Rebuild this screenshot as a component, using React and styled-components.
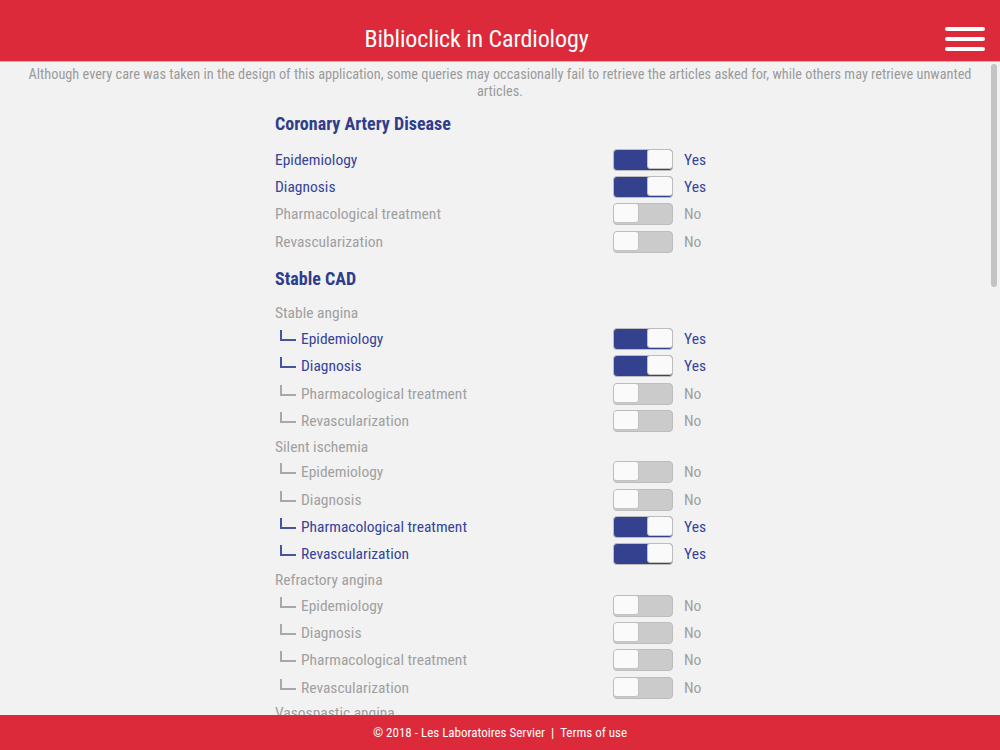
import React from 'react';
import styled, { createGlobalStyle } from 'styled-components';

const GlobalStyle = createGlobalStyle`
  html, body {
    margin: 0;
    padding: 0;
    height: 100%;
    background: #f2f2f2;
    font-family: "Roboto Condensed", "Liberation Sans Narrow", "DejaVu Sans Condensed", Roboto, sans-serif;
  }
  #root {
    height: 100%;
  }
`;

const Page = styled.div`
  height: 100vh;
  display: flex;
  flex-direction: column;
  background: #f2f2f2;
`;

const Header = styled.header`
  flex: 0 0 61px;
  box-sizing: border-box;
  display: flex;
  align-items: center;
  background: #dc2a3a;
  padding: 17px 15px 0 0;
  box-shadow: 0 1px 0 #e9a6ad;
  position: relative;
  z-index: 1;
`;

const Title = styled.h1`
  flex: 1;
  margin: 0;
  padding-left: 8px;
  text-align: center;
  color: #fff;
  font-size: 24px;
  font-weight: 400;
  letter-spacing: -0.1px;
`;

const MenuButton = styled.button`
  width: 40px;
  height: 24px;
  padding: 0;
  border: 0;
  background: none;
  display: flex;
  flex-direction: column;
  justify-content: space-between;
  cursor: pointer;
`;

const MenuLine = styled.span`
  display: block;
  height: 4px;
  border-radius: 2px;
  background: #fff;
`;

const Body = styled.div`
  flex: 1;
  min-height: 0;
  position: relative;
  display: flex;
`;

const Main = styled.main`
  flex: 1;
  overflow-y: auto;
  padding-top: 5px;
`;

const ScrollThumb = styled.div`
  position: absolute;
  top: 3px;
  right: 3px;
  width: 6px;
  height: 223px;
  border-radius: 3px;
  background: #c4c4c4;
  pointer-events: none;
`;

const Disclaimer = styled.p`
  margin: 0;
  padding: 0 18px;
  text-align: center;
  color: #9b9b9b;
  font-size: 14.3px;
  line-height: 17px;
`;

const Column = styled.div`
  width: 450px;
  margin: 0 auto;
  padding-bottom: 20px;
`;

const SectionTitle = styled.h2`
  margin: 0;
  height: 46px;
  display: flex;
  align-items: center;
  color: #2f3d8e;
  font-size: 18px;
  font-weight: 700;
`;

const Group = styled.div`
  height: 24px;
  display: flex;
  align-items: center;
  color: #a0a0a0;
  font-size: 15.5px;
`;

const Row = styled.div`
  height: 27.33px;
  display: flex;
  align-items: center;
  font-size: 15.5px;
  color: ${(p) => (p.on ? '#35439a' : '#a0a0a0')};
`;

const Label = styled.div`
  flex: 1;
  display: flex;
  align-items: center;
  padding-left: ${(p) => (p.sub ? '5px' : '0')};
`;

const Branch = styled.span`
  width: 14px;
  height: 9px;
  margin: -7px 5px 0 0;
  border-left: 2px solid currentColor;
  border-bottom: 2px solid currentColor;
  opacity: 0.9;
`;

const Switch = styled.div`
  width: 60px;
  height: 22px;
  box-sizing: border-box;
  border-radius: 4px;
  border: 1px solid #bdbdbd;
  background: ${(p) => (p.on ? '#33418f' : '#cbcbcb')};
  display: flex;
  justify-content: ${(p) => (p.on ? 'flex-end' : 'flex-start')};
  overflow: hidden;
`;

const Knob = styled.span`
  width: 26px;
  height: 100%;
  box-sizing: border-box;
  background: #fafafa;
  border-radius: 3px;
  border: 1px solid #c2c2c2;
  margin: -1px;
`;

const Status = styled.span`
  width: 41px;
  margin-left: 11px;
  font-size: 15.5px;
`;

const Footer = styled.footer`
  flex: 0 0 35px;
  display: flex;
  align-items: center;
  justify-content: center;
  background: #dc2a3a;
  color: #fff;
  font-size: 13px;
`;

const FooterLink = styled.a`
  color: #fff;
  text-decoration: none;
`;

const Sep = styled.span`
  margin: 0 6px;
`;

const topics = ['Epidemiology', 'Diagnosis', 'Pharmacological treatment', 'Revascularization'];

const sections = [
  {
    title: 'Coronary Artery Disease',
    items: [{ values: [true, true, false, false] }],
  },
  {
    title: 'Stable CAD',
    items: [
      { group: 'Stable angina', values: [true, true, false, false] },
      { group: 'Silent ischemia', values: [false, false, true, true] },
      { group: 'Refractory angina', values: [false, false, false, false] },
      { group: 'Vasospastic angina', values: [false, false, false, false] },
      { group: 'Microvascular angina', values: [false, false, false, false] },
    ],
  },
  {
    title: 'Acute Coronary Syndromes',
    items: [
      { group: 'Unstable angina', values: [false, false, false, false] },
      { group: 'NSTEMI', values: [false, false, false, false] },
      { group: 'STEMI', values: [false, false, false, false] },
    ],
  },
  {
    title: 'Heart Failure',
    items: [
      { group: 'Chronic heart failure', values: [false, false, false, false] },
      { group: 'Acute heart failure', values: [false, false, false, false] },
    ],
  },
];

function ToggleRow({ name, on, sub }) {
  return (
    <Row on={on}>
      <Label sub={sub}>
        {sub && <Branch />}
        {name}
      </Label>
      <Switch on={on}>
        <Knob />
      </Switch>
      <Status>{on ? 'Yes' : 'No'}</Status>
    </Row>
  );
}

export default function App() {
  return (
    <>
      <GlobalStyle />
      <Page>
        <Header>
          <Title>Biblioclick in Cardiology</Title>
          <MenuButton aria-label="Menu">
            <MenuLine />
            <MenuLine />
            <MenuLine />
          </MenuButton>
        </Header>
        <Body>
          <Main>
            <Disclaimer>
              Although every care was taken in the design of this application, some queries may occasionally fail to retrieve the articles asked for, while others may retrieve unwanted articles.
            </Disclaimer>
            <Column>
              {sections.map((section) => (
                <React.Fragment key={section.title}>
                  <SectionTitle>{section.title}</SectionTitle>
                  {section.items.map((item, i) => (
                    <React.Fragment key={i}>
                      {item.group && <Group>{item.group}</Group>}
                      {topics.map((t, j) => (
                        <ToggleRow key={t} name={t} on={item.values[j]} sub={!!item.group} />
                      ))}
                    </React.Fragment>
                  ))}
                </React.Fragment>
              ))}
            </Column>
          </Main>
          <ScrollThumb />
        </Body>
        <Footer>
          © 2018 - Les Laboratoires Servier<Sep>|</Sep>
          <FooterLink href="#">Terms of use</FooterLink>
        </Footer>
      </Page>
    </>
  );
}
